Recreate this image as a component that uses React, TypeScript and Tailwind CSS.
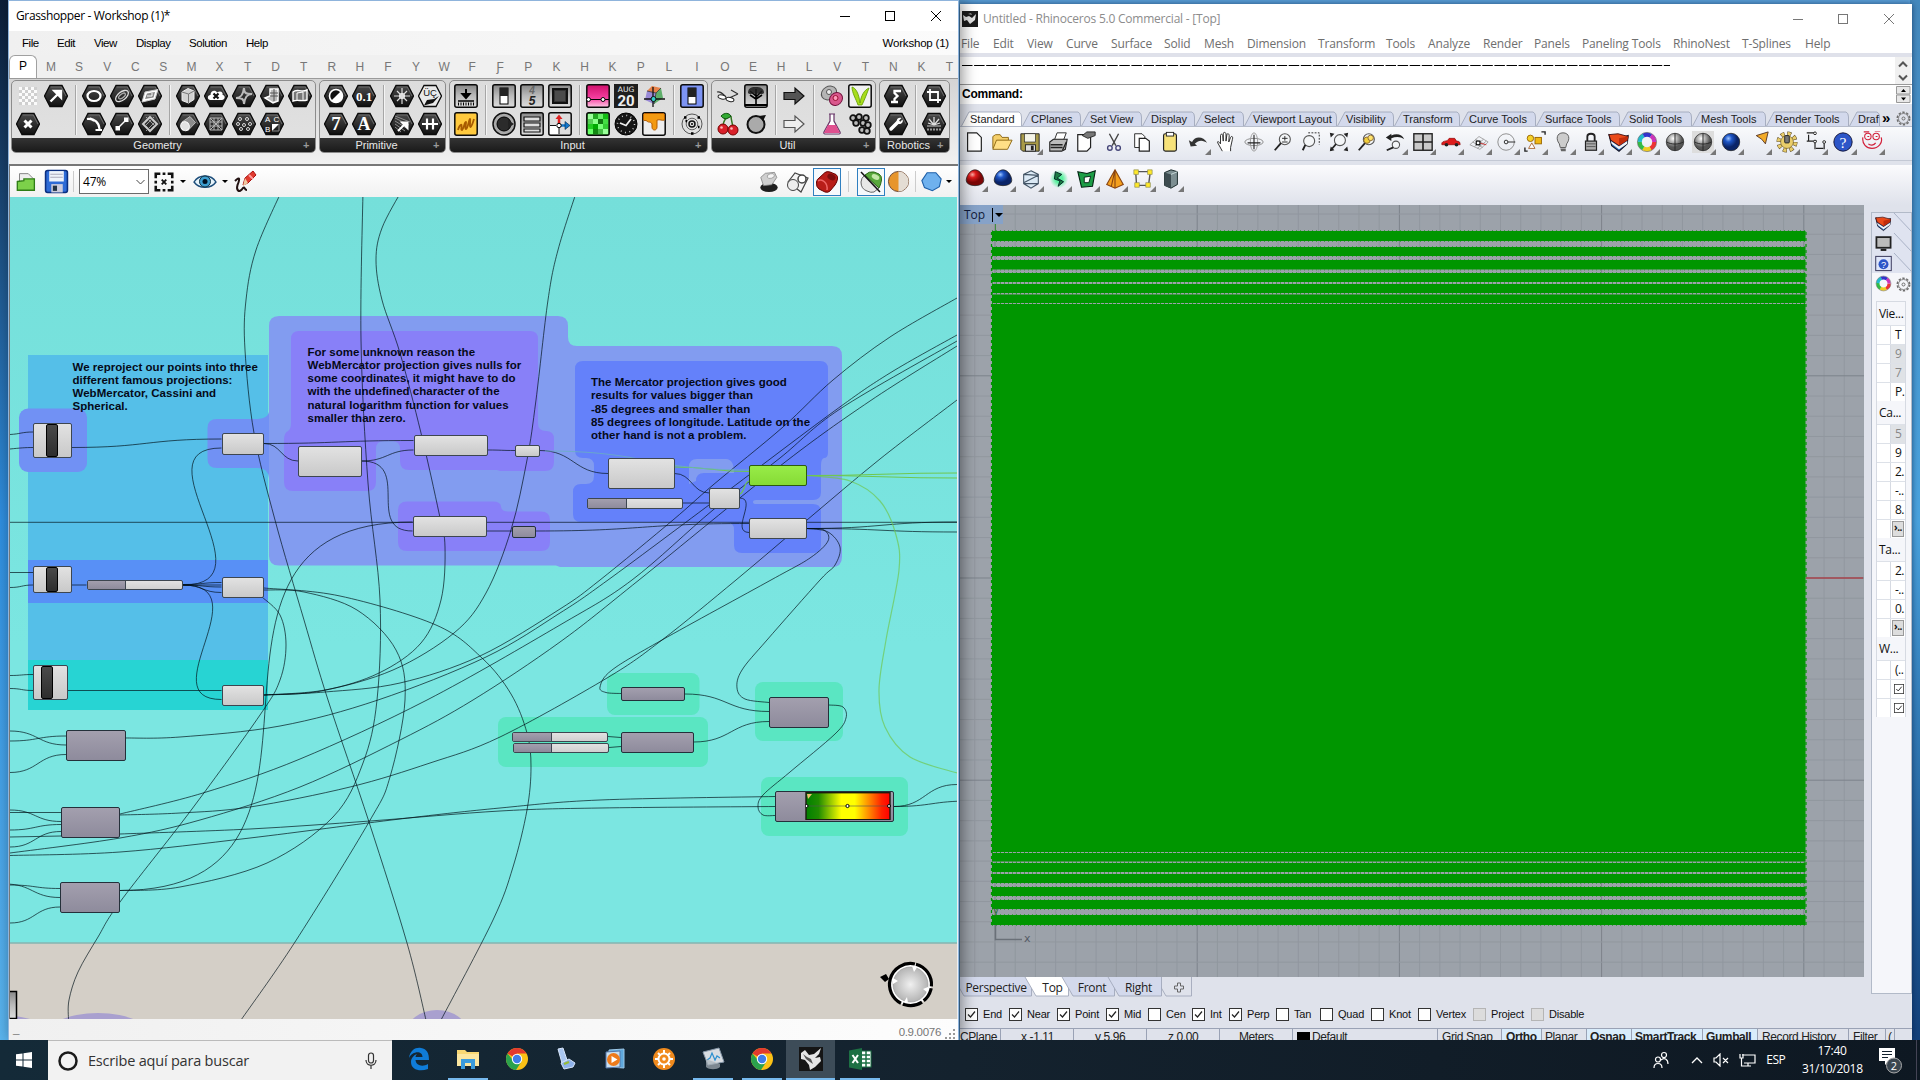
import React from 'react';

type Pt = [number, number];

/* ---------- helpers ---------- */

function spline(p: Pt[]): string {
  let d = `M${p[0][0]} ${p[0][1]}`;
  for (let i = 0; i < p.length - 1; i++) {
    const a = p[i - 1] || p[i];
    const b = p[i];
    const c = p[i + 1];
    const e = p[i + 2] || c;
    d += ` C${b[0] + (c[0] - a[0]) / 6} ${b[1] + (c[1] - a[1]) / 6} ${c[0] - (e[0] - b[0]) / 6} ${c[1] - (e[1] - b[1]) / 6} ${c[0]} ${c[1]}`;
  }
  return d;
}

const wire = (x1: number, y1: number, x2: number, y2: number) => {
  const m = (x1 + x2) / 2;
  return `M${x1} ${y1} C${m} ${y1} ${m} ${y2} ${x2} ${y2}`;
};

/* Labels laid out in a row, each one as wide as the distance to the next. */
function Slots({ items, start, end, className = '' }: { items: [string, number][]; start: number; end: number; className?: string }) {
  return (
    <div className={`flex shrink-0 items-center whitespace-nowrap ${className}`}>
      <span className="shrink-0" style={{ width: items[0][1] - start }} />
      {items.map(([t, x], i) => (
        <span key={i} className="shrink-0" style={{ width: (items[i + 1] ? items[i + 1][1] : end) - x }}>
          {t}
        </span>
      ))}
    </div>
  );
}

function Ico({ children, s = 24 }: { children: React.ReactNode; s?: number }) {
  return (
    <svg width={s} height={s} viewBox="0 0 24 24" className="block shrink-0" fill="none">
      {children}
    </svg>
  );
}

/* ---------- Grasshopper ribbon icons ---------- */

const W = '#fff';

function Hex({ children, light }: { children?: React.ReactNode; light?: boolean }) {
  return (
    <Ico>
      <path d="M6 1.5H18L23.5 12L18 22.5H6L.5 12Z" fill={light ? '#e9e9e9' : 'url(#hexg)'} stroke="#0b0b0b" strokeWidth="1.3" />
      {!light && <path d="M6.7 3H17.3L22 12" stroke="#777" strokeWidth=".8" />}
      {children}
    </Ico>
  );
}

function Tile({ children, fill = 'url(#tileg)' }: { children?: React.ReactNode; fill?: string }) {
  return (
    <Ico>
      <rect x=".8" y=".8" width="22.4" height="22.4" rx="2" fill={fill} stroke="#0a0a0a" strokeWidth="1.5" />
      {children}
    </Ico>
  );
}

function HexText({ t, size, y = 17 }: { t: string; size: number; y?: number }) {
  return (
    <Hex>
      <text x="12" y={y} textAnchor="middle" fontSize={size} fontWeight="bold" fill={W} fontFamily="Liberation Serif, serif">
        {t}
      </text>
    </Hex>
  );
}

const gh: Record<string, React.ReactNode> = {
  checker: (
    <Ico>
      {[0, 1, 2, 3, 4, 5].map((r) =>
        [0, 1, 2, 3, 4, 5].map((c) => (
          <rect key={`${r}${c}`} x={3 + c * 3} y={3 + r * 3} width="3" height="3" fill={(r + c) % 2 ? '#cfcfcf' : '#fbfbfb'} />
        )),
      )}
    </Ico>
  ),
  arrow: <Hex><path d="M6.5 17.5L14 10M10.5 7H17V13.5Z" stroke={W} strokeWidth="2.4" fill={W} /></Hex>,
  cross: <Hex><path d="M8.5 8.5L15.5 15.5M15.5 8.5L8.5 15.5" stroke={W} strokeWidth="3" /></Hex>,
  circle: <Hex><ellipse cx="12" cy="12" rx="6.5" ry="5" stroke={W} strokeWidth="2.2" /></Hex>,
  ellipse: (
    <Hex>
      <ellipse cx="12" cy="12" rx="7.5" ry="4" transform="rotate(-38 12 12)" stroke="#ddd" strokeWidth="1.3" />
      <ellipse cx="12" cy="12" rx="4" ry="1.8" transform="rotate(-38 12 12)" stroke="#aaa" strokeWidth="1.3" />
    </Hex>
  ),
  plane: <Hex><path d="M7 8L20 5.5L17 15L4 18Z" fill={W} stroke="#ccc" /><path d="M9 9.5L17 8L15.5 13.5L7 15Z" fill="#888" /><path d="M9 12H14V9" stroke={W} /></Hex>,
  arc: <Hex><path d="M5 7C13 6 17 11 17.5 17M13.5 18H20" stroke={W} strokeWidth="2.2" /><path d="M8 6L12 9" stroke={W} strokeWidth="2" /></Hex>,
  line: <Hex><path d="M8 16L16 8" stroke={W} strokeWidth="1.4" /><rect x="5.5" y="14" width="4.5" height="4.5" fill={W} /><rect x="14" y="5.5" width="4.5" height="4.5" fill={W} /></Hex>,
  rect: <Hex><path d="M12 5L19 12L12 19L5 12Z" stroke="#ccc" strokeWidth="2" /><path d="M8 5L17 14M16 5L7 14M8 19L17 10" stroke="#aaa" strokeWidth=".9" /></Hex>,
  box: <Hex><path d="M6 8L12 4.5L18 7V15.5L12.5 19L6 16.5Z" fill="#d2d2d2" stroke="#eee" /><path d="M6 8L12.5 10L18 7M12.5 10V19" stroke="#777" /></Hex>,
  cloud: <Hex><path d="M6.5 16C3 16 3 11 6.5 11C6.5 6 12 6 13 8.5C17 6 19.5 9 18.5 11C22 11.5 21 16 18 16Z" fill={W} /><path d="M9.5 9.5L14.5 14.5M14.5 9.5L9.5 14.5" stroke="#111" strokeWidth="2.2" /></Hex>,
  brep: <Hex><path d="M4 14C9 14 11 11 12 4M20 10C15 10 13 13 12 20M12 4C12 10 15 10 20 10M4 14C9 14 12 14 12 20" stroke="#bbb" strokeWidth="2" /></Hex>,
  mesh: <Hex><path d="M10 5H18V17L13 19L5 14L10 12Z" fill="#bbb" stroke={W} strokeWidth="1.5" /><path d="M14 5V17M10 9H18M10 12H18" stroke="#555" /></Hex>,
  surf: <Hex><path d="M5 17V8C9 4 13 9 19 6V16C14 18 10 15 5 17Z" fill="#777" stroke={W} strokeWidth="1.4" /><path d="M9 16V9L15 8V16" stroke={W} /></Hex>,
  cyl: <Hex><path d="M6 10L14 4.5L19.5 10.5L12 18.5Z" fill="#8c8c8c" stroke="#ccc" strokeWidth=".8" /><ellipse cx="9" cy="14.2" rx="4.2" ry="4.6" transform="rotate(-35 9 14.2)" fill="#e2e2e2" stroke={W} /></Hex>,
  grid: <Hex><path d="M6 6H18V18H6ZM10 6V18M14 6V18M6 10H18M6 14H18M6 6L18 18M18 6L6 18" stroke="#b5b5b5" strokeWidth="1" /></Hex>,
  pts: (
    <Hex>
      {[[8, 7], [15, 7], [6, 12], [12, 13], [18, 12], [9, 17], [16, 17]].map(([x, y]) => (
        <circle key={`${x}-${y}`} cx={x} cy={y} r="1.5" stroke="#ddd" strokeWidth="1" />
      ))}
    </Hex>
  ),
  abc: (
    <Hex>
      <text x="5" y="10" fontSize="8" fill={W} fontFamily="Liberation Sans">A</text>
      <text x="13.5" y="10" fontSize="8" fill={W} fontFamily="Liberation Sans">C</text>
      <text x="5" y="19.5" fontSize="8" fill={W} fontFamily="Liberation Sans">B</text>
      <path d="M12 12H19L12 19Z" fill={W} /><path d="M19 12V19H12" stroke="#888" />
    </Hex>
  ),
  bool: <Hex><circle cx="12" cy="12" r="6.5" fill="#111" stroke={W} strokeWidth="1.6" /><path d="M16.6 7.4A6.5 6.5 0 0 1 7.4 16.6Z" fill={W} /></Hex>,
  dec: <HexText t="0.1" size={13} y={16.5} />,
  seven: <HexText t="7" size={19} y={18} />,
  letter: <HexText t="A" size={18} y={18} />,
  burst: <Hex><circle cx="12" cy="12" r="3" fill={W} /><path d="M12 4V20M4 12H20M7 7L17 17M17 7L7 17" stroke="#ddd" strokeWidth="1.2" /></Hex>,
  uc: (
    <Hex light>
      <text x="12" y="12" textAnchor="middle" fontSize="9.5" fill="#111" fontFamily="Liberation Sans">ÜÇ</text>
      <path d="M6 21.500L9 16L16 15L21 12L15 19Z" fill="#111" />
    </Hex>
  ),
  field: <Hex><path d="M5 6L19 13M5 9L18 17M5 12L15 19M5 15L11 20M5 4L20 10" stroke="#999" strokeWidth=".9" /><path d="M8 19L15 12M12 10.5H17.5V16Z" stroke={W} strokeWidth="2" fill={W} /></Hex>,
  domain: <Hex><path d="M4 12H20M9 6.5V17.5M15 6.5V17.5" stroke={W} strokeWidth="2.2" /></Hex>,
  down: <Tile><path d="M12 5V13M8.5 10L12 14L15.5 10Z" stroke="#000" strokeWidth="2" fill="#000" /><path d="M4 17H20" stroke="#000" strokeWidth="1.5" /><path d="M4 20H20" stroke="#000" strokeWidth="3" strokeDasharray="1 1.5" /></Tile>,
  scribble: <Tile fill="#ffc93d"><path d="M4 18C5 14 7 12 7.500 13C8 15 6.500 18 8 18C9.500 17 11 9 12 10C12.500 11 10.500 17 12 17C14 16 15 7 16 7C17 8 15 15 16.500 15C18 14 19 10 20 7" stroke="#a85b00" strokeWidth="1.8" /></Tile>,
  toggle: <Tile><rect x="8" y="4" width="8" height="16" fill="#fff" stroke="#000" /><rect x="8" y="4" width="8" height="8" fill="#222" /></Tile>,
  digits: (
    <Tile>
      <text x="12" y="10" textAnchor="middle" fontSize="10" fontWeight="bold" fontStyle="italic" fill="#666" fontFamily="Liberation Sans">4</text>
      <text x="12" y="21" textAnchor="middle" fontSize="12" fontWeight="bold" fontStyle="italic" fill="#222" fontFamily="Liberation Sans">5</text>
    </Tile>
  ),
  screen: <Tile><rect x="5" y="5" width="14" height="14" fill="#333" stroke="#111" strokeWidth="2" /><rect x="7" y="7" width="10" height="10" fill="#4a4a4a" /></Tile>,
  knob: <Ico><circle cx="12" cy="12" r="11" fill="#aaa" stroke="#111" strokeWidth="1.5" /><circle cx="12" cy="12" r="7" fill="#2b2b2b" stroke="#000" /><path d="M16 8L22 12L16 16Z" fill="#222" /></Ico>,
  list: <Tile><path d="M4 5H20V9H4ZM4 11H20V15H4ZM4 17H20V20H4Z" fill="#ddd" stroke="#111" strokeWidth="1.2" /></Tile>,
  gizmo: <Tile fill="#ddd"><rect x="2" y="13" width="9" height="9" fill="#fff" /><path d="M11 13V5" stroke="#d22" strokeWidth="2.5" /><path d="M7.5 7L11 2.5L14.5 7Z" fill="#d22" /><path d="M12 13.5H18" stroke="#17c" strokeWidth="2.5" /><path d="M17 9.5L22 13.5L17 17.5Z" fill="#17c" stroke="#024" strokeWidth=".6" /><circle cx="11" cy="13.5" r="2.2" fill="#fff" stroke="#000" /><path d="M11 16V22M2 13.500H8" stroke="#111" /></Tile>,
  pink: <Tile fill="url(#pinkg)"><path d="M1 15.5H23" stroke="#000" /><circle cx="2.5" cy="15.5" r="2" fill="#fff" stroke="#000" /><circle cx="17" cy="15.5" r="2" fill="#fff" stroke="#000" /></Tile>,
  cal: (
    <Ico>
      <rect width="24" height="24" fill="#1e1e1e" />
      <text x="12" y="7.5" textAnchor="middle" fontSize="7.5" fill="#eee" fontFamily="DejaVu Sans">AUG</text>
      <text x="12" y="21.500" textAnchor="middle" fontSize="15" fontWeight="bold" fill="#eee" fontFamily="Roboto">20</text>
    </Ico>
  ),
  cube: <Ico><path d="M5 7L10 2L19 4L14 9Z" fill="#e8824a" /><path d="M5 7L14 9L12 20L3 16Z" fill="#9a8ad6" /><path d="M14 9L19 4L21 14L12 20Z" fill="#5fae6a" /><path d="M5 7L14 9L19 4M14 9L12 20" stroke="#333" strokeWidth=".8" /><path d="M2 15H23M11 3V23" stroke="#111" strokeWidth="1.3" /><circle cx="11.5" cy="15" r="2.5" fill="#3cc" stroke="#111" /></Ico>,
  green: (
    <Tile fill="#3cb83c">
      {['#9f9', '#2a2', '#6e6', '#1b1', '#5c5', '#8f8', '#171', '#4d4', '#2c2', '#0a0', '#7f7', '#3c3', '#6f6', '#181', '#4b4', '#9f9'].map((c, i) => (
        <rect key={i} x={2 + (i % 4) * 5} y={2 + Math.floor(i / 4) * 5} width="5" height="5" fill={c} />
      ))}
    </Tile>
  ),
  clock: <Ico><circle cx="12" cy="12" r="11" fill="#151515" stroke="#000" /><circle cx="12" cy="12" r="8.5" stroke="#ccc" strokeWidth="1.5" strokeDasharray="1 3.45" /><path d="M6 11L12 13.5L17 7" stroke="#eee" strokeWidth="1.8" /></Ico>,
  honey: <Tile fill="#eee"><path d="M1.5 3C1.5 2 2 1.5 3 1.5H21C22 1.5 22.5 2 22.5 3V8C20 9 18 7 15 8V15C15 19 10 19 10 15V12C9 9 6 11 5 9C4 8 2 9 1.5 8Z" fill="#f39a12" stroke="#b55c00" /></Tile>,
  toggleBlue: <Tile fill="#7d94f4"><rect x="8" y="4" width="8" height="16" fill="#fff" stroke="#000" /><rect x="8" y="4" width="8" height="9" fill="#222" /></Tile>,
  atom: <Ico><circle cx="12" cy="12" r="10" stroke="#555" strokeWidth="1" /><circle cx="12" cy="12" r="5.800" stroke="#666" strokeWidth="1" /><circle cx="12" cy="12" r="3" stroke="#111" strokeWidth="1.5" /><circle cx="12" cy="12" r="1" fill="#000" /><path d="M4 5.500h2.500M17.500 5.500h2.500M11 21.5h2.500M5.500 9h1.500M18 15h1.500" stroke="#000" strokeWidth="2.5" /></Ico>,
  glasses: <Ico><path d="M1 8C4 7 6 9 9 12M22 10L15 6M13 14L22 10" stroke="#333" strokeWidth="1.2" /><ellipse cx="6" cy="13" rx="4" ry="2" transform="rotate(12 6 13)" fill="#fff" stroke="#222" /><ellipse cx="14" cy="15.5" rx="4" ry="2" transform="rotate(12 14 15.5)" fill="#fff" stroke="#222" /></Ico>,
  tree: <Tile><path d="M12 21V12L6 7M12 13L18 7M12 12V5M12 15L18 11M12 15L6 11" stroke="#000" strokeWidth="1.6" /><path d="M4 9C4 3 9 3 12 3C16 3 20 4 20 9C18 11 16 9 12 10C9 9 6 11 4 9Z" fill="#1b1b1b" fillOpacity=".85" /><path d="M1 20H23V22H1Z" fill="#000" /></Tile>,
  arrowDark: <Ico><path d="M2 8.5H13V4L22 12L13 20V15.5H2Z" fill="#555" stroke="#111" strokeWidth="1.2" /></Ico>,
  arrowLight: <Ico><path d="M2 8.5H13V4L22 12L13 20V15.5H2Z" fill="#eee" stroke="#555" strokeWidth="1.2" /></Ico>,
  pills: <Ico><ellipse cx="9" cy="9" rx="8" ry="6.5" fill="#b5b5b5" stroke="#555" transform="rotate(-30 9 9)" /><circle cx="9" cy="8" r="2.5" fill="#eee" stroke="#555" /><ellipse cx="16" cy="15" rx="7" ry="6" fill="#d9578c" stroke="#70113c" transform="rotate(-45 16 15)" /><circle cx="15.5" cy="14" r="2.5" fill="#f9b" stroke="#913" /></Ico>,
  sprout: <Tile fill="#f2f2f2"><path d="M4 3C8 4 11 10 12 19C13 12 16 6 21 4C19 9 17 15 14 21H10C8 15 4 9 4 3Z" fill="#a8dd1c" stroke="#5e9a00" strokeWidth=".8" /></Tile>,
  cherry: <Ico><path d="M7 15C7 8 10 5 15 4M17 15C16 10 15 7 15 4" stroke="#372" strokeWidth="1.5" /><path d="M5 4C9 0 13 1 15 4C11 8 7 7 5 4Z" fill="#3a3" stroke="#151" /><circle cx="7" cy="17" r="5" fill="#d9202a" stroke="#700" /><circle cx="17" cy="18" r="5" fill="#d9202a" stroke="#700" /><circle cx="5.5" cy="15.5" r="1.3" fill="#fbb" /><circle cx="15.5" cy="16.5" r="1.3" fill="#fbb" /></Ico>,
  ring: <Ico><circle cx="12" cy="12.5" r="8.5" fill="#aaa" stroke="#111" strokeWidth="2" /><path d="M15 4L22 3L19 9Z" fill="#111" /></Ico>,
  flask: <Ico><path d="M9 2H15M10 2V9L4 20C3.5 21.5 4 22 5 22H19C20 22 20.5 21.5 20 20L14 9V2" fill="#fff" stroke="#636" strokeWidth="1.2" /><path d="M8 13H16L20 21H4Z" fill="#e0508f" /></Ico>,
  balls: (
    <Ico>
      {[[5, 6], [11, 5], [18, 6], [8, 11], [15, 11], [20, 13], [14, 18], [19, 19]].map(([x, y], i) => (
        <circle key={i} cx={x} cy={y} r="2.8" fill="#bbb" stroke="#111" strokeWidth="1.8" />
      ))}
    </Ico>
  ),
  robot: <Hex><path d="M7 18H14M10.500 18V15L13.500 12L10.500 9V7H17" stroke={W} strokeWidth="2.3" /></Hex>,
  crop: <Hex><path d="M8 5V16H19M5 8H16V19" stroke={W} strokeWidth="1.8" /></Hex>,
  wrench: <Hex><path d="M7 17L14 10" stroke={W} strokeWidth="3.5" strokeLinecap="round" /><path d="M17.5 6L15 8.5L16 10L18.5 7.5C20 11 16 13 13.5 11.5C11.5 8 14 4.5 17.5 6Z" fill={W} /></Hex>,
  spark: <Hex><path d="M5 14H19" stroke="#ccc" strokeWidth="1.2" /><path d="M5 17.5H19" stroke="#999" strokeWidth="2" strokeDasharray="2 1" /><path d="M12 13V5M12 13L7 7M12 13L17 7M12 13L6 11M12 13L18 11" stroke="#ddd" strokeWidth="1.3" /></Hex>,
};

/* each section: [top row, bottom row] */
const ribbon: { name: string; w: number; ml: number; sections: [string[], string[]][] }[] = [
  { name: 'Geometry', w: 305, ml: 1, sections: [[['checker', 'arrow'], ['cross']], [['circle', 'ellipse', 'plane'], ['arc', 'line', 'rect']], [['box', 'cloud', 'brep', 'mesh', 'surf'], ['cyl', 'grid', 'pts', 'abc']]] },
  { name: 'Primitive', w: 127, ml: 3, sections: [[['bool', 'dec'], ['seven', 'letter']], [['burst', 'uc'], ['field', 'domain']]] },
  { name: 'Input', w: 259, ml: 3, sections: [[['down'], ['scribble']], [['toggle', 'digits', 'screen'], ['knob', 'list', 'gizmo']], [['pink', 'cal', 'cube'], ['green', 'clock', 'honey']], [['toggleBlue'], ['atom']]] },
  { name: 'Util', w: 165, ml: 3, sections: [[['glasses', 'tree'], ['cherry', 'ring']], [['arrowDark'], ['arrowLight']], [['pills', 'sprout'], ['flask', 'balls']]] },
  { name: 'Robotics', w: 71, ml: 3, sections: [[['robot'], ['wrench']], [['crop'], ['spark']]] },
];

function Ribbon() {
  return (
    <div className="flex h-[86px] shrink-0 border-t border-[#9a9a9a] bg-gradient-to-b from-[#d4d4d4] to-[#f1f1f1] pl-[1px] pt-[1px]">
      {ribbon.map((g) => (
        <div key={g.name} className="flex h-[73px] shrink-0 flex-col overflow-hidden rounded-[5px] border border-[#8c8c8c] bg-gradient-to-b from-[#dcdcdc] to-[#e2e2e2]" style={{ width: g.w, marginLeft: g.ml }}>
          <div className="flex h-[58px] pl-[2px] pt-[1px]">
            {g.sections.map((s, i) => (
              <React.Fragment key={i}>
                {i > 0 && <div className="mx-[4.5px] my-[3px] w-[1px] shrink-0 bg-[#a6a6a6] shadow-[1px_0_0_#f4f4f4]" />}
                <div className="flex shrink-0 flex-col">
                  {s.map((row, r) => (
                    <div key={r} className="flex h-[28px]">
                      {row.map((n) => (
                        <div key={n} className="flex h-[28px] w-[28px] items-center justify-center">{gh[n]}</div>
                      ))}
                    </div>
                  ))}
                </div>
              </React.Fragment>
            ))}
          </div>
          <div className="flex h-[14px] items-center bg-gradient-to-b from-[#343434] to-[#1a1a1a] text-[11px] leading-[13px] text-[#e8e8e8]">
            <span className="flex-1 text-center">{g.name}</span>
            <span className="w-[12px] text-[11px] font-bold text-[#999]">+</span>
          </div>
        </div>
      ))}
    </div>
  );
}

/* ---------- Grasshopper toolbar ---------- */

const Caret = () => <span className="h-0 w-0 border-x-[3px] border-t-[3px] border-x-transparent border-t-black" />;

function CanvasToolbar() {
  return (
    <div className="flex h-[33px] shrink-0 items-center border-t-2 border-[#777] bg-gradient-to-b from-[#fff] to-[#f1f1f1] pl-[6px]">
      <Ico s={21}><path d="M4 3H14L20 9V20H4Z" fill="#eee" stroke="#777" /><path d="M1.5 12L9 11V9H21V22H1.5Z" fill="#7cd14a" stroke="#2f7d16" strokeWidth="1.5" /></Ico>
      <span className="w-[7px]" />
      <Ico s={25}><rect x="1.5" y="1.5" width="21" height="21" rx="2" fill="#2e6bd6" stroke="#0b2f80" strokeWidth="1.5" /><rect x="5" y="2" width="14" height="10" fill="#eef3fa" /><path d="M6 5H18M6 8H18" stroke="#aab" /><rect x="7" y="14.5" width="11" height="8" fill="#ccd" /><rect x="8.5" y="16" width="4" height="5" fill="#234" /></Ico>
      <span className="ml-[4px] mr-[5px] h-[21px] w-px bg-[#ccc]" />
      <div className="flex h-[25px] w-[70px] items-center border border-[#6b6b6b] bg-white pl-[3px] text-[12px]">
        <span className="flex-1 font-['Open_Sans'] tracking-[-0.2px]">47%</span>
        <svg width="9" height="6" className="mr-[3px]"><path d="M.5 1L4.5 5L8.5 1" stroke="#444" fill="none" /></svg>
      </div>
      <span className="w-[4px]" />
      <Ico s={22}><path d="M3 8V3H8M10.500 3H13.500M16 3H21V8M21 10.500V13.500M21 16V21H16M13.500 21H10.500M8 21H3V16M3 13.500V10.500" stroke="#111" strokeWidth="2.800" /><path d="M9.5 9.5L14.5 14.5M14.5 9.5L9.5 14.5" stroke="#111" strokeWidth="2" /></Ico>
      <span className="w-[5px]" /><Caret /><span className="w-[7px]" />
      <Ico s={24}><path d="M1 12C6 4 18 4 23 12C18 19 6 19 1 12Z" fill="#e8f4fb" stroke="#1d4d7a" strokeWidth="1.4" /><circle cx="12" cy="11.5" r="5.5" fill="#3d9ed0" stroke="#134" /><circle cx="12" cy="11.5" r="2.5" fill="#012" /></Ico>
      <span className="w-[5px]" /><Caret /><span className="w-[5px]" />
      <Ico s={24}><path d="M2 11C7 6 7 9 4.500 15C3 20 6 24 10 18C12 16 11 20 14 20" stroke="#211" strokeWidth="2" /><path d="M10 15L12 8L20 1L23 5L15 13Z" fill="#e03a2e" stroke="#a11" /><path d="M16 5L20 9" stroke="#f99" strokeWidth="2" /><path d="M10 16L12 8L15 13Z" fill="#efc9a0" /></Ico>
      <span className="flex-1" />
      <Ico s={22}><ellipse cx="12" cy="18" rx="9.500" ry="5" fill="#1e1e1e" /><path d="M3 7L8 2.500L18 1.500L20.500 7L15 15L6 16Z" fill="#cfcfcf" stroke="#777" strokeWidth=".8" /><ellipse cx="14" cy="5.500" rx="4" ry="2.500" transform="rotate(-15 14 5.500)" fill="#f4f4f4" stroke="#888" strokeWidth=".7" /></Ico>
      <span className="w-[6px]" />
      <Ico s={24}><path d="M2 12L9 3L22 8L15 22Z" fill="#f4f4f4" stroke="#444" strokeWidth="1.2" /><circle cx="7" cy="15" r="5.5" fill="#eee" stroke="#444" /><circle cx="16" cy="9" r="4" fill="#fff" stroke="#444" strokeWidth="1.5" /></Ico>
      <span className="w-[3px]" />
      <div className="flex h-[28px] w-[28px] items-center justify-center border border-[#2f7fc0] bg-[#f6f9fc]">
        <Ico s={24}><path d="M1.500 12Q2 9 4 8L10 2.500Q12 1 15 2L21 4.500Q23 6 22.500 9Q22 12 20 15L15 21Q13 23 10 22L4 19Q1 17 1.500 12Z" fill="#b81d18" stroke="#600" /><ellipse cx="16.500" cy="7" rx="4.300" ry="3" transform="rotate(25 16.500 7)" fill="#7c0d0d" /><path d="M3 11C7 8 13 13 12 20" stroke="#e66" strokeWidth="1.5" /></Ico>
      </div>
      <span className="ml-[7px] mr-[8px] h-[21px] w-px bg-[#ccc]" />
      <div className="flex h-[28px] w-[28px] items-center justify-center border border-[#2f7fc0] bg-[#f6f9fc]">
        <Ico s={24}><path d="M2 12Q2 8 6 5L20 18L15 22Q12 23 8 21Q2 19 2 12Z" fill="#e8e8e8" stroke="#666" /><path d="M6 5Q10 1 15 2L20 4Q23 6 22.500 10Q22 14 20 18Z" fill="#59a83c" stroke="#2b6a15" /><ellipse cx="16.500" cy="7" rx="4" ry="2.5" transform="rotate(25 16.500 7)" fill="#c4e8a8" /><path d="M2 2L21 22" stroke="#111" strokeWidth="1.5" /></Ico>
      </div>
      <span className="w-[2px]" />
      <Ico s={23}><circle cx="12" cy="12" r="10.5" fill="#e7952c" stroke="#643" /><path d="M12 1.5A10.5 10.5 0 0 1 12 22.5Z" fill="#e4ddd4" /></Ico>
      <span className="mx-[5px] h-[21px] w-px bg-[#ccc]" />
      <Ico s={21}><path d="M7 2H17L23 9L21 18L13 22.5L4 19L1 11Z" fill="#6fb1ee" stroke="#1e5fa8" strokeWidth="1.3" /></Ico>
      <span className="w-[4px]" /><Caret /><span className="w-[6px]" />
    </div>
  );
}

/* ---------- Grasshopper canvas ---------- */

const darkWires: string[] = [
  'M10 434.5C20 434 22 432 33 432', 'M10 449C20 448 25 447.5 33 447.5',
  wire(72, 447.5, 221.5, 439),
  'M183 585C275 585 135 448 221.5 448', 'M183 585C262 585 150 699.5 221.5 699.5',
  wire(183, 584.5, 221.5, 582.5), 'M183 585H221.5', wire(183, 585, 221.5, 587), wire(183, 585, 221.5, 592.5),
  'M72 585H86.5', 'M67.5 690.5H221.5', 'M10 572.5H33', wire(10, 587.5, 33, 585), wire(10, 675.5, 33, 674.5), wire(10, 688.5, 33, 690.5),
  wire(264, 443.5, 298, 461), wire(264, 443.5, 413.5, 440.5), wire(361.5, 461, 413.5, 450),
  'M361.5 461C413 461 364 531 412.5 531', wire(488, 450, 515, 450.5), wire(539.5, 450.5, 608, 473.5),
  'M487 531H512', wire(536, 531, 749, 523.5), 'M10 522.3H957',
  'M120 890.5C385 890.5 145 522 412.5 522',
  spline([[120, 890.5], [180, 887], [267, 863], [333, 817], [363, 763], [377, 700], [380, 600], [368, 483], [361, 340], [363, 190]]),
  spline([[264, 590], [304, 592], [357, 610], [396, 650], [405, 700], [390, 777], [369, 822], [295, 942], [241, 1020]]),
  spline([[264, 588], [340, 596], [436, 625], [482, 658], [511, 694], [527, 733], [531, 767], [527, 810], [513, 867], [493, 920], [441, 1020]]),
  spline([[282, 190], [256, 250], [246, 300], [245, 350], [254, 433], [275, 520], [304, 620], [328, 700], [369, 822], [407, 943], [426, 1020]]),
  spline([[402, 190], [382, 228], [376, 260], [382, 300], [400, 353], [421, 433], [439, 513], [445, 547], [441, 600], [421, 643], [379, 673], [325, 690], [264, 695]]),
  spline([[577, 190], [558, 250], [548, 300], [536, 400], [527, 460], [511, 530], [486, 593], [454, 633], [393, 670], [321, 691], [264, 695]]),
  spline([[264, 695], [325, 692], [400, 683], [480, 656], [560, 609], [600, 580], [673, 520], [713, 485], [783, 427], [833, 380], [890, 337], [957, 298]]),
  spline([[125.5, 738], [180, 737], [280, 726], [378, 700], [486, 657], [560, 613], [608, 580], [713, 502], [833, 412], [890, 373], [957, 335]]),
  spline([[120, 814], [203, 793], [300, 759], [427, 700], [560, 625], [632, 580], [713, 510], [780, 458], [840, 409], [957, 341]]),
  spline([[10, 853], [120, 838], [200, 820], [300, 787], [400, 740], [473, 700], [560, 642], [639, 580], [780, 466], [870, 401], [957, 346]]),
  spline([[120, 815], [180, 813], [250, 807], [350, 787], [430, 763], [500, 737], [607, 678], [662, 640], [736, 580], [807, 520], [880, 459], [957, 400]]),
  wire(674.5, 473.5, 709.5, 493), 'M683 503H709.5', 'M739.5 498C758 498 730 532 749 532.5',
  wire(807, 528.5, 957, 522), wire(807, 528.5, 957, 532),
  spline([[807, 528.5], [824, 530], [828, 541], [810, 558], [771, 580], [662, 640], [612, 670], [600, 687], [606, 692.5], [621, 693.5]]),
  spline([[807, 528.5], [828, 532], [840, 547], [835, 565], [820, 580], [767, 640], [742, 670], [737, 688], [745, 699], [769, 702.5]]),
  wire(685, 694, 769, 711.5), wire(693.5, 742, 769, 721.5),
  spline([[829, 705], [843, 707], [846, 718], [835, 734], [790, 772], [763, 795], [758, 807], [763, 815], [775, 815.5]]),
  'M608 736.5L621 737.5', 'M609 747.5L621 746.5',
  spline([[10, 855.5], [120, 852], [250, 838], [400, 819], [500, 808], [600, 800], [775, 796.5]]),
  spline([[120, 834], [250, 829], [370, 821], [500, 811], [600, 808], [775, 806.5]]),
  'M10 837L61 836',
  wire(894, 806.5, 957, 784.5), wire(894, 806.5, 970, 801),
  wire(10, 741, 66, 736), wire(10, 731, 66, 745), wire(10, 772.5, 66, 754.5),
  'M10 812.5H61', wire(10, 810, 61, 821.5), wire(10, 830, 61, 824.5), wire(10, 847, 61, 831.5),
  wire(10, 885, 60, 888.5), wire(5, 884, 60, 897.5), wire(10, 923, 60, 907),
  spline([[262, 597], [280, 615], [286, 645], [280, 680], [260, 715], [192, 809], [120, 902], [98, 937], [78, 972], [69, 1000], [68.5, 1020]]),
];

const greenWires: string[] = [
  wire(674, 467, 749, 471.5), wire(807, 475.5, 957, 473), wire(807, 475.5, 957, 478), wire(739.5, 494, 749, 481),
  spline([[807, 475.5], [850, 481], [880, 501], [896, 535], [899, 570], [886, 640], [879, 690], [885, 727], [910, 757], [957, 773]]),
];

/* kind, left, top, right, bottom, divider */
type Node = ['light' | 'gray' | 'lime' | 'bar' | 'slider', number, number, number, number, number?];
const nodes: Node[] = [
  ['bar', 33, 422.5, 72, 457.5, 45.5], ['light', 221.5, 433, 264, 454.5], ['bar', 33, 565.5, 72, 593, 45.5],
  ['slider', 86.5, 579.5, 183, 590, 126], ['light', 221.5, 577, 264, 598], ['bar', 33, 665, 67.5, 699.5, 41],
  ['light', 221.5, 684.5, 264, 706], ['light', 298, 445.5, 361.5, 476.5], ['light', 413.5, 434.5, 488, 456],
  ['light', 515, 444.5, 539.5, 456.5], ['light', 412.5, 515.5, 487, 537], ['gray', 512, 525.5, 536, 537.5],
  ['light', 608, 458, 674.5, 488.5], ['slider', 587, 498, 683, 508.5, 626.5], ['light', 709, 487.5, 739.5, 508.5],
  ['lime', 749, 465, 807, 486], ['light', 749, 518, 807, 539],
  ['gray', 621, 687, 685, 701], ['gray', 621, 731.5, 694, 753], ['slider', 512, 731.5, 608, 741.5, 551.5],
  ['slider', 513, 742.5, 609, 752.5, 552], ['gray', 769, 696.5, 829, 727.5],
  ['gray', 66, 730, 126, 761], ['gray', 61, 806.5, 120, 837.5], ['gray', 60, 882, 120, 913],
];

const kindClass = {
  light: 'bg-gradient-to-b from-[#e2e2e2] to-[#c9c9c9] border-[#3d4650]',
  gray: 'bg-gradient-to-b from-[#a39fae] to-[#8e8b9c] border-[#24303a]',
  lime: 'bg-gradient-to-b from-[#98ec48] to-[#86db35] border-[#2c5a10]',
  bar: 'bg-gradient-to-b from-[#e2e2e2] to-[#c9c9c9] border-[#3d4650]',
  slider: 'bg-gradient-to-b from-[#e2e2e2] to-[#d0d0d0] border-[#3d4650]',
};

function NodeBox({ n }: { n: Node }) {
  const [k, l, t, r, b, d] = n;
  return (
    <div className={`absolute flex rounded-[2px] border-[1.5px] ${kindClass[k]}`} style={{ left: l - 10, top: t - 197, width: r - l, height: b - t }}>
      {k === 'slider' && <div className="border-r border-[#3d4650] bg-gradient-to-b from-[#a39fae] to-[#8e8b9c]" style={{ width: (d as number) - l - 1 }} />}
      {k === 'bar' && <div className="w-[12px] rounded-[2px] border border-black bg-gradient-to-b from-[#4a4a4a] to-[#2e2e2e]" style={{ marginLeft: (d as number) - l - 1 }} />}
    </div>
  );
}

function Note({ x, y, lines }: { x: number; y: number; lines: string[] }) {
  return (
    <div className="absolute font-['Liberation_Sans'] text-[11.5px] font-bold leading-[13.3px] tracking-[0.03px] whitespace-nowrap text-[#050a18]" style={{ left: x - 10, top: y - 197 }}>
      {lines.map((l) => <div key={l}>{l}</div>)}
    </div>
  );
}

function Canvas() {
  return (
    <div className="relative h-[822px] w-[947px] shrink-0 overflow-hidden bg-[#d4cfc7]">
      <svg className="absolute inset-0" width="947" height="822" viewBox="10 197 947 822" fill="none">
        <rect x="10" y="197" width="947" height="746" fill="url(#aqua)" />
        <path d="M10 943H957" stroke="#85b5b0" strokeWidth="1.5" />
        <ellipse cx="98" cy="1040" rx="56" ry="27" fill="#a9a0cf" />
        <ellipse cx="437" cy="1032" rx="30" ry="22" fill="#a9a0cf" />
        <path d="M10 1016Q20 1016 30 1019H10Z" fill="#a9a0cf" />
        <rect x="28" y="355" width="240" height="355" fill="#55bfe8" />
        <rect x="28" y="560" width="240" height="43" fill="#5890f6" />
        <rect x="28" y="660" width="240" height="50" fill="#27d4d3" />
        <rect x="19" y="408.5" width="68" height="63.5" rx="9" fill="#7191f4" />
        <path d="M217 419H258Q268 418 269 412V478Q268 468 258 468H217Q207.5 468 207.5 459V428Q207.5 419 217 419Z" fill="#7191f4" />
        <path d="M279 316H558Q568 316 568 326V337Q568 346 577 346H832Q842 346 842 356V557Q842 567 832 567H560L556 565.5H279Q269 565.5 269 556V326Q269 316 279 316Z" fill="#829cf0" />
        <path d="M299 331H530Q538 331 538 339V423Q538 431 546 431Q554 431 554 439V462Q554 471 545 471H500L497 470H409Q400 470 400 461V449Q400 441 392 441H384Q376 441 376 449V482Q376 491 367 491H293Q284 491 284 482V440Q284 433 288 431Q291 429 291 423V339Q291 331 299 331Z" fill="#8880f8" />
        <path d="M407 501.5H493Q501 501.5 501 507Q502 511.5 508 511.5H541Q550 511.5 550 520V542Q550 551 541 551H407Q398 551 398 542V510Q398 501.5 407 501.5Z" fill="#8880f8" />
        <path d="M583 361H820Q828 361 828 369V452Q828 458 824 458Q821 459 821 465V492Q821 500 813 500H756Q753 500 753 502Q753 504 756 504H813Q821 504 821 512V545Q821 553 813 553H742Q734 553 734 545V530Q734 522 726 522H581Q573 522 573 514V492Q573 484 581 484H586Q594 484 594 476V466Q594 458 586 458H583Q575 458 575 450V369Q575 361 583 361Z" fill="#6481fa" />
        <path d="M689 484V467Q689 459 697 459H726Q734 459 734 473H704Q696 473 696 481Z" fill="#829cf0" />
        <g fill="#5ae6c2">
          <rect x="607" y="673" width="92.5" height="42" rx="8" />
          <rect x="498" y="717" width="210" height="50" rx="8" />
          <rect x="755" y="682" width="88" height="59" rx="8" />
          <rect x="761" y="777" width="147" height="59" rx="8" />
        </g>
        <g stroke="#001018" strokeOpacity=".68" strokeWidth="1">
          {darkWires.map((d, i) => <path key={i} d={d} />)}
        </g>
        <g stroke="#6fc850" strokeWidth="1.2">
          {greenWires.map((d, i) => <path key={i} d={d} strokeOpacity={i === 4 ? 0.7 : 1} />)}
        </g>
        <path d={wire(545, 451, 749, 470)} stroke="#69b0c0" strokeWidth=".8" />
        <rect x="5" y="991.5" width="11.5" height="27" fill="url(#tileg)" stroke="#000" strokeWidth="1.5" />
      </svg>
      {nodes.map((n, i) => <NodeBox key={i} n={n} />)}
      <div className="absolute left-[765px] top-[594px] flex h-[31px] w-[119px] rounded-[2px] border-[1.5px] border-[#24303a] bg-gradient-to-b from-[#a39fae] to-[#8e8b9c] pl-[29px]">
        <svg width="86" height="28" viewBox="0 0 86 28">
          <rect x="1" y=".7" width="84" height="27" fill="url(#heat)" stroke="#1a1a10" strokeWidth="1.4" />
          <path d="M2 2H7L3 7Z" fill="#f0c070" />
          <path d="M2 14H84" stroke="#555" strokeWidth=".6" />
          <g fill="#fff" stroke="#000"><circle cx="1.5" cy="14" r="1.5" /><circle cx="42.5" cy="14" r="1.6" /><circle cx="84" cy="14" r="1.5" /></g>
        </svg>
      </div>
      <Note x={72.5} y={360.5} lines={['We reproject our points into three', 'different famous projections:', 'WebMercator, Cassini and', 'Spherical.']} />
      <Note x={307.5} y={345.5} lines={['For some unknown reason the', 'WebMercator projection gives nulls for', 'some coordinates, it might have to do', 'with the undefined character of the', 'natural logarithm function for values', 'smaller than zero.']} />
      <Note x={591} y={376} lines={['The Mercator projection gives good', 'results for values bigger than', '-85 degrees and smaller than', '85 degrees of longitude. Latitude on the', 'other hand is not a problem.']} />
      <svg className="absolute left-[868px] top-[760px]" width="60" height="54" viewBox="878 957 60 54">
        <circle cx="910.5" cy="984.5" r="21" stroke="#000" strokeWidth="3.2" strokeDasharray="29 2 15 2 20 2 60 2" fill="#fff" transform="rotate(-75 910.5 984.5)" />
        <circle cx="910.5" cy="984.5" r="17.5" fill="url(#ball)" stroke="#999" strokeWidth=".6" />
        <path d="M880 977L886 974L889 979L885 982Z" fill="#000" />
        <path d="M912 966L917 967.5L914 972ZM893 978L898 981L893 984ZM928 987L923 989L928 993ZM904 1002L908 1003L907 997Z" fill="#fff" />
      </svg>
    </div>
  );
}

const ghTabs = 'M S V C S M X T D T R H F Y W F Ƒ P K H K P L I O E H L V T N K T'.split(' ');

function GrasshopperWindow() {
  return (
    <section className="absolute left-[8px] top-0 flex h-[1040px] w-[951px] flex-col border-x border-t border-[#8fb4dc] bg-[#f0f0f0] font-['Liberation_Sans'] text-black shadow-[3px_0_14px_rgba(0,0,0,0.45)]">
      <div className="flex h-[30px] shrink-0 items-center bg-white pl-[7px] font-['Open_Sans'] text-[12px] tracking-[-0.35px]">
        <span className="flex-1">Grasshopper - Workshop (1)*</span>
        <svg width="120" height="14" viewBox="0 0 120 14" fill="none" stroke="#000" className="mr-[12px]">
          <path d="M14 7.500H24" /><rect x="59.5" y="2.5" width="9" height="9" /><path d="M105 2L115 12M115 2L105 12" />
        </svg>
      </div>
      <div className="flex h-[24px] shrink-0 items-center justify-between bg-gradient-to-r from-[#f0f0f0] to-[#fbfbfb] pr-[9px] pt-[2px] text-[11.5px] tracking-[-0.45px]">
        <Slots start={10} end={300} items={[['File', 23], ['Edit', 58], ['View', 95], ['Display', 137], ['Solution', 190], ['Help', 247]]} />
        <span className="tracking-[-0.2px]">Workshop (1)</span>
      </div>
      <div className="flex h-[23px] shrink-0 items-center">
        <div className="flex h-[23px] w-[28px] items-center justify-center rounded-t-[6px] border border-b-0 border-[#a0a0a0] bg-white pb-[3px] text-[12px]">P</div>
        <div className="flex flex-1 overflow-hidden text-[12px] text-[#777]">
          {ghTabs.map((t, i) => <span key={i} className="w-[28.09px] shrink-0 text-center">{t}</span>)}
        </div>
      </div>
      <Ribbon />
      <div className="flex w-[949px] shrink-0 flex-col border-l border-[#777]">
        <CanvasToolbar />
        <Canvas />
      </div>
      <div className="flex h-[21px] items-center bg-gradient-to-r from-[#f0f0f0] to-[#fdfdfd] pl-[4px] pt-[7px] text-[11.5px] text-[#777]">
        <span className="-mt-[6px] flex-1">_</span>
        <span className="tracking-[-0.3px]">0.9.0076</span>
        <svg width="14" height="12" className="ml-[3px] mt-[2px]" fill="#999"><path d="M9 1h2v2H9zM9 5h2v2H9zM9 9h2v2H9zM5 5h2v2H5zM5 9h2v2H5zM1 9h2v2H1z" /></svg>
      </div>
    </section>
  );
}

/* ---------- Rhino icons ---------- */

const K = '#222';
const Lens = ({ x = 14, y = 9, r = 6 }: { x?: number; y?: number; r?: number }) => (
  <>
    <circle cx={x} cy={y} r={r} fill="#f4f6f8" stroke="#555" strokeWidth="1.2" />
    <path d={`M${x - r * 0.7} ${y + r * 0.7}L3 21`} stroke={K} strokeWidth="2" />
  </>
);
const Ball = ({ f }: { f: string }) => <circle cx="12" cy="12" r="9.5" fill={f} stroke="#222" strokeWidth=".8" />;

const LayerIcon = (
  <>
    <path d="M1 4L12 8L22 5L21 14L12 22L4 16Z" fill="#2f6fc0" stroke="#112" strokeWidth="1.2" />
    <path d="M3 11L12 17L21 11V14L12 20L4 14Z" fill="#f4f4f4" />
    <path d="M1 4L11 3L22 6L21 10L12 16L3 10Z" fill="#ea4a1a" stroke="#411" />
    <path d="M12 8L22 6L21 10L12 16Z" fill="#c22c0c" />
  </>
);
const Wheel = (
  <>
    {['#e33', '#ec2', '#3b4', '#2bc', '#33c', '#c3b'].map((c, i) => (
      <circle key={c} cx="12" cy="12" r="8" stroke={c} strokeWidth="4.5" strokeDasharray="8.6 42" strokeDashoffset={-8.38 * i} />
    ))}
    <circle cx="12" cy="12" r="10.5" stroke="#555" strokeWidth=".6" />
  </>
);

const rhinoIcons: [React.ReactNode, boolean][] = [
  [<path d="M5 2H15L20 7V22H5Z" fill="#fff" stroke={K} strokeWidth="1.3" />, false],
  [<><path d="M2 19V6L5 4H10L12 7H19V10" fill="#f5cf6a" stroke="#8a6510" /><path d="M2 20L6 10H23L18 20Z" fill="#ffdf86" stroke="#8a6510" /></>, false],
  [<><path d="M2 3H22V22H4L2 20Z" fill="#a89a48" stroke={K} /><rect x="6" y="3" width="12" height="9" fill="#f4f4e8" stroke={K} strokeWidth=".7" /><rect x="7" y="15" width="11" height="7" fill="#ddd" stroke={K} /><rect x="13" y="16" width="3" height="5" fill={K} /></>, true],
  [<><path d="M8 10L11 2H21L18 10Z" fill="#fff" stroke={K} /><path d="M3 12L7 9H22L20 20L16 22H3Z" fill="#bbb" stroke={K} strokeWidth="1.2" /><path d="M4 15H17M4 18H17M17 21L21 12" stroke={K} strokeWidth="1.4" /></>, false],
  [<><path d="M3 4H17V18L13 22H3Z" fill="#fff" stroke={K} strokeWidth="1.3" /><path d="M8 5L13 1H22V5L14 8Z" fill="#777" stroke={K} /></>, false],
  [<><path d="M7 3L14 16M17 3L10 16" stroke="#444" strokeWidth="1.5" /><circle cx="7.5" cy="18.5" r="2.5" stroke="#447" strokeWidth="1.5" /><circle cx="16.5" cy="18.5" r="2.5" stroke="#447" strokeWidth="1.5" /></>, false],
  [<><path d="M4 3H12L15 6V18H4Z" fill="#fff" stroke={K} /><path d="M9 8H16L20 11V22H9Z" fill="#fff" stroke={K} strokeWidth="1.3" /></>, false],
  [<><rect x="5" y="3" width="14" height="19" rx="2" fill="#f7e27a" stroke={K} strokeWidth="1.3" /><rect x="8" y="1.5" width="8" height="4" fill="#fff" stroke={K} /></>, false],
  [<path d="M2 10L4 17L11 16L8.5 14C13 9 18 10 22 13C18 6 9 5 5.5 12Z" fill="#333" />, true],
  [<path d="M8 22L3 13C2 11 4 11 6 14V5C6 3 8 3 8.5 5L9 11V3C9 1 11.5 1 12 3V11L13 4C13.5 2 15.5 3 15.5 5L15 12L17 7C18 5 20 6 19 9L17 18V22" fill="#fff" stroke={K} />, false],
  [<><ellipse cx="12" cy="12" rx="10" ry="4" stroke="#888" /><ellipse cx="12" cy="12" rx="4" ry="10" stroke="#999" /><path d="M12 4V20M5 13H19" stroke={K} strokeWidth="1.2" /></>, false],
  [<><Lens /><path d="M11 8H17M14 5.5V10.5M11 12H17" stroke={K} /></>, false],
  [<><path d="M9 2H21V15" stroke={K} strokeDasharray="2 1.5" /><Lens x={10} y={11} /></>, false],
  [<><Lens x={13} y={10} /><path d="M2 2L7 3L3 7ZM22 2L17 3L21 7ZM22 22L17 21L21 17ZM2 22L3 17L7 21Z" fill={K} /></>, false],
  [<><Lens /><circle cx="12" cy="10" r="3.5" fill="#f2cf3a" stroke="#863" /><circle cx="16" cy="7.5" r="3" fill="#ffe36a" stroke="#863" /></>, false],
  [<><path d="M2 7L8 3V5C14 2 20 4 22 9C18 6 13 6 8 8V11Z" fill={K} /><Lens x={13} y={15} r={4} /></>, true],
  [<><rect x="2" y="3" width="20" height="18" fill="#c9c9c9" stroke={K} strokeWidth="1.5" /><path d="M12 3V21M2 12H22" stroke={K} strokeWidth="1.8" /></>, true],
  [<><path d="M2 13C3 11 6 11 8 10.500L10 8H16L18 11C21 11 22 12 22 15H2Z" fill="#dd1c1c" stroke="#800" strokeWidth=".7" /><circle cx="7" cy="15" r="2" fill={K} /><circle cx="18" cy="15" r="2" fill={K} /></>, true],
  [<><path d="M2 15L12 6L22 12L13 20ZM5 12L16 18M8 9L19 15M17 9L7 17M20 11L10 19" stroke="#999" strokeWidth=".9" /><path d="M12 13L20 15" stroke="#c33" /><rect x="9" y="11" width="4" height="4" fill="#fff" stroke="#000" strokeWidth="1.2" /></>, true],
  [<><circle cx="11" cy="12" r="9" stroke="#888" /><circle cx="11" cy="12" r="2" stroke={K} /><path d="M13 12H21" stroke={K} /></>, true],
  [<><circle cx="7" cy="8" r="3.5" fill="#f5d22a" stroke="#960" /><rect x="12" y="7" width="7" height="7" fill="#f0b814" stroke="#960" /><path d="M5 19L8.5 13L12 19Z" fill="#fff" stroke="#a63" /><path d="M1 18V22H4M19 1H23V4" stroke={K} strokeWidth="1.5" /></>, true],
  [<><path d="M12 2C5 2 4 9 8 14L9 18H15L16 14C20 9 19 2 12 2Z" fill="#ccc" stroke="#555" /><path d="M9 19H15V22H10Z" fill="#666" /></>, true],
  [<><path d="M8 11V6C8 2 16 2 16 6V11" stroke={K} strokeWidth="2" /><rect x="6" y="11" width="12" height="10" fill="#aaa" stroke={K} strokeWidth="1.3" /><path d="M7 14H17M7 17H17" stroke="#555" /></>, true],
  [LayerIcon, true],
  [Wheel, true],
  [<><Ball f="url(#ball2)" /><path d="M3 12C8 15 16 15 21 12M12 2.5V21.5" stroke={K} /></>, false],
  [<><rect width="24" height="24" fill="#ddd" /><Ball f="url(#ball2)" /><path d="M3 12C8 15 16 15 21 12M12 2.5V21.5" stroke={K} /></>, true],
  [<Ball f="url(#ballBlue)" />, true],
  [<path d="M9 5L22 1L19 14L15 9Z" fill="#f3ab28" stroke="#532" />, true],
  [<><circle cx="12" cy="12" r="9" stroke="#542" strokeWidth="5" strokeDasharray="4.2 2.87" /><circle cx="12" cy="12" r="9" stroke="#e9cd6a" strokeWidth="4" strokeDasharray="3.2 3.87" strokeDashoffset="-.5" /><circle cx="12" cy="12" r="7" fill="#e9cd6a" stroke="#542" strokeWidth=".6" /><rect x="9.500" y="5" width="5" height="8" rx="1" fill="#777" stroke={K} /></>, true],
  [<><path d="M3 2H12M5 4V11M3 11H14M12 11V20M22 11V20M13 19H21" stroke={K} strokeWidth="1.3" /><circle cx="12" cy="2.5" r="1.5" fill="#fff" stroke={K} /><circle cx="12" cy="11.5" r="1.5" fill="#fff" stroke={K} /><circle cx="22" cy="12" r="1.5" fill="#fff" stroke={K} /></>, true],
  [<><circle cx="12" cy="12" r="10" fill="#2d56c8" stroke="#113" /><text x="12" y="18" textAnchor="middle" fontSize="17" fill="#fff" fontFamily="Liberation Serif">?</text></>, true],
  [<><path d="M2 7C1 14 6 19 12 19C19 19 24 13 22 7" stroke="#d2203a" strokeWidth="1.3" /><circle cx="7.5" cy="6" r="3.5" stroke="#d2203a" strokeWidth="1.2" /><circle cx="16.5" cy="6" r="3.5" stroke="#d2203a" strokeWidth="1.2" /><path d="M3 1H9M15 0H21M7 6H9M16 6H18M8 14C10 16 14 16 16 13" stroke="#d2203a" strokeWidth="1.3" /></>, true],
];

const egg = (f: string) => <path d="M12 2C18 2 22 10 21.5 14C21 21 3 21 2.5 14C2 10 6 2 12 2Z" fill={f} stroke="#222" strokeWidth=".8" />;
const rhinoRow2: [React.ReactNode, boolean][] = [
  [egg('url(#eggRed)'), true],
  [egg('url(#ballBlue)'), true],
  [<path d="M12 3L20 7V17L12 22L4 17V7ZM4 7L20 8M4 16L20 8M4 17H20" fill="#dbe9f5" stroke="#456" strokeWidth="1.2" />, true],
  [<><circle cx="12" cy="12" r="10" fill="url(#glow)" /><path d="M8 4L15 7L10 11L17 15L11 20L13 14L7 12Z" fill="#1b7d44" stroke="#022" /></>, true],
  [<><path d="M2 4L12 6L21 3L18 20L6 21Z" fill="#1d9d46" stroke="#021" strokeWidth="1.2" /><path d="M9 10L16 9L14 16L9 16Z" fill="#fff" stroke="#021" /></>, true],
  [<path d="M12 2L21 18L12 22L3 18ZM12 2V22M12 2L8 20" fill="#f5a01d" stroke="#841" strokeWidth="1.2" />, true],
  [<><path d="M4 4H20L18 19H5Z" stroke="#555" strokeWidth="1.5" /><path d="M2 2h5v5H2zM17 2h5v5H17zM15 16h5v5H15zM3 16h5v5H3z" fill="#ffe92a" stroke="#885" strokeWidth=".7" /></>, true],
  [<><path d="M5 5L12 2L19 4V18L12 22L5 19Z" fill="#7d8f92" stroke="#122" /><path d="M12 7V22L5 19V5Z" fill="#3d4c50" /><path d="M12 7L19 4" stroke="#cdd" /></>, true],
];

function IconRow({ items }: { items: [React.ReactNode, boolean][] }) {
  return (
    <>
      {items.map(([g, c], i) => (
        <div key={i} className="relative flex h-[28px] w-[28.05px] shrink-0 items-center justify-center">
          <svg width="22" height="22" viewBox="0 0 24 24" fill="none">{g}</svg>
          {c && <span className="absolute bottom-[1px] right-[1px] h-0 w-0 border-b-[6px] border-l-[6px] border-b-[#777] border-l-transparent" />}
        </div>
      ))}
    </>
  );
}

const rhinoTabs: [string, number][] = [
  ['Standard', 961], ['CPlanes', 1022], ['Set View', 1081], ['Display', 1142], ['Select', 1195], ['Viewport Layout', 1244], ['Visibility', 1337], ['Transform', 1394], ['Curve Tools', 1460], ['Surface Tools', 1536], ['Solid Tools', 1620], ['Mesh Tools', 1692], ['Render Tools', 1766], ['Draf', 1849],
];

const bands: [number, number][] = [[231, 241], [247, 256], [260, 269.5], [273, 282], [284, 293], [294.5, 303], [304, 852], [853, 861.5], [863, 872], [874, 883], [887, 896], [900, 909], [915, 925]];

function Viewport() {
  const v = Array.from({ length: 46 }, (_, i) => 995 - 20.22 + i * 20.22);
  const h = Array.from({ length: 40 }, (_, i) => 578 - 18 * 20.22 + i * 20.22);
  return (
    <div className="relative h-[772px] w-[904px] bg-[#9ca2aa]">
      <svg className="block" width="904" height="772" viewBox="960 205 904 772" fill="none">
        {v.map((x, i) => <path key={i} d={`M${x} 205V977`} stroke={i % 10 === 1 ? '#7d838b' : '#91979f'} strokeWidth="1" />)}
        {h.map((y, i) => <path key={i} d={`M960 ${y}H1864`} stroke={(i - 18) % 10 === 0 ? '#7d838b' : '#91979f'} strokeWidth="1" />)}
        <path d="M995.5 222V231" stroke="#3f8f3f" />
        <path d="M1806 578H1863" stroke="#a8444c" strokeWidth="1.5" />
        {bands.map(([a, b], i) => (
          <g key={i}>
            <rect x="992" y={a} width="813.5" height={b - a} fill="#009600" />
            <path d={`M992 ${a - 0.5}H1805M992 ${b + 0.5}H1805`} stroke="#009600" strokeOpacity=".55" strokeDasharray="1 3" />
          </g>
        ))}
        <path d="M991.500 232V926M1806 232V926" stroke="#009600" strokeWidth="1.2" strokeDasharray="3 3" />
        <path d="M995.5 925V939.5H1022" stroke="#6a7078" strokeWidth="1.5" />
        <text x="1024" y="942" fontSize="11" fill="#555b66" fontFamily="DejaVu Sans">x</text>
        <text x="993" y="914" fontSize="10" fill="#2d6a35" fontFamily="DejaVu Sans">y</text>
      </svg>
      <div className="absolute left-0 top-0 flex h-[19px] w-[43px] items-center bg-[#86a2c8] pl-[4px] font-['Open_Sans'] text-[12px] text-[#101a3a]">
        <span className="w-[28px]">Top</span>
        <span className="mr-[2px] h-[14px] w-px bg-black" />
        <span className="h-0 w-0 border-x-[4px] border-t-[4px] border-x-transparent border-t-black" />
      </div>
    </div>
  );
}

type PropRow = { k: 'h' | 'r' | 'g' | 'b' | 'c'; t?: string };
const props: PropRow[] = [
  { k: 'h', t: 'Vie...' }, { k: 'r', t: 'T' }, { k: 'g', t: '9' }, { k: 'g', t: '7' }, { k: 'r', t: 'P.' },
  { k: 'h', t: 'Ca...' }, { k: 'g', t: '5' }, { k: 'r', t: '9' }, { k: 'r', t: '2.' }, { k: 'r', t: '-..' }, { k: 'r', t: '8.' }, { k: 'b' },
  { k: 'h', t: 'Ta...' }, { k: 'r', t: '2.' }, { k: 'r', t: '-..' }, { k: 'r', t: '0.' }, { k: 'b' },
  { k: 'h', t: 'W...' }, { k: 'r', t: '(..' }, { k: 'c' }, { k: 'c' },
];

function Check({ on, off, s = 13 }: { on?: boolean; off?: boolean; s?: number }) {
  return (
    <svg width={s} height={s} viewBox="0 0 13 13" className="shrink-0">
      <rect x=".5" y=".5" width="12" height="12" fill={off ? '#dcdcdc' : '#fff'} stroke={off ? '#b5b5b5' : '#333'} />
      {on && <path d="M3 6.5L5.5 9L10 3.5" stroke="#222" fill="none" strokeWidth="1.2" />}
    </svg>
  );
}

const Gear = () => (
  <svg width="15" height="15" viewBox="0 0 15 15" fill="none" stroke="#6e6e6e" className="shrink-0">
    <circle cx="7.5" cy="7.5" r="6.2" strokeDasharray="2.4 1.5" strokeWidth="1.6" />
    <circle cx="7.5" cy="7.5" r="5" strokeWidth=".8" />
    <circle cx="7.5" cy="7.5" r="1.5" />
  </svg>
);

function SidePanel() {
  return (
    <div className="flex h-[782px] w-[41px] flex-col border border-[#b2bac8] bg-[#f5f6fa]">
      {[0, 1, 2, 3].map((i) => (
        <div key={i} className={`flex h-[20px] items-center pl-[3px] ${i < 3 ? 'bg-[#dfe3f0]' : ''}`}>
          <svg width="17" height="17" viewBox="0 0 24 24" fill="none" className="shrink-0">
            {i === 0 && LayerIcon}
            {i === 1 && <><rect x="2" y="3" width="20" height="15" fill="#bbb" stroke="#222" strokeWidth="2.5" /><path d="M8 21H16" stroke="#222" strokeWidth="3" /></>}
            {i === 2 && <><rect x="1" y="2" width="22" height="20" fill="#dfe6fa" stroke="#446" strokeWidth="1.5" /><circle cx="12" cy="13" r="7" fill="#2d56c8" /><text x="12" y="18" fontSize="13" fill="#fff" textAnchor="middle" fontFamily="Liberation Sans">?</text></>}
            {i === 3 && Wheel}
          </svg>
          {i < 3 ? (
            <svg width="20" height="20" fill="none" className="shrink-0"><path d="M2 0L20 19" stroke="#a9b2c6" /></svg>
          ) : (
            <span className="ml-[4px] mt-[3px]"><Gear /></span>
          )}
        </div>
      ))}
      <div className="ml-[4px] mt-[8px] w-[30px] border-x border-t border-[#d6dae2] font-['Open_Sans'] text-[12px] text-[#111]">
        {props.map((p, i) =>
          p.k === 'h' ? (
            <div key={i} className="flex h-[23px] items-center pl-[2px] tracking-[-0.3px]">{p.t}</div>
          ) : (
            <div key={i} className="flex h-[19px] border-t border-[#dde1e8] bg-white">
              <div className="w-[14px] border-r border-[#d6dae2]" />
              <div className={`flex flex-1 items-center overflow-hidden whitespace-nowrap pl-[4px] tracking-[-0.5px] ${p.k === 'g' ? 'bg-[#dfe2e6] text-[#888]' : ''}`}>
                {p.k === 'b' ? <span className="-ml-[3px] h-[16px] w-[12px] border border-[#999] bg-[#ddd] pl-[1px] text-[10px] font-bold leading-[11px]">›..</span> : p.k === 'c' ? <span className="-ml-[1px]"><Check on s={10} /></span> : p.t}
              </div>
            </div>
          ),
        )}
      </div>
    </div>
  );
}

const osnaps: [string, number, number][] = [
  ['End', 965, 1], ['Near', 1009, 1], ['Point', 1057, 1], ['Mid', 1106, 1], ['Cen', 1148, 0], ['Int', 1192, 1], ['Perp', 1229, 1], ['Tan', 1276, 0], ['Quad', 1320, 0], ['Knot', 1371, 0], ['Vertex', 1418, 0], ['Project', 1473, 2], ['Disable', 1531, 2],
];

const statusCells: [string, number, string][] = [
  ['CPlane', 41, ''], ['x -1.11', 73, 'pl-[20px]'], ['y 5.96', 73, 'pl-[21px]'], ['z 0.00', 73, 'pl-[21px]'], ['Meters', 73, 'pl-[19px]'], ['■Default', 145, ''], ['Grid Snap', 64, 'pl-[4px]'], ['Ortho', 40, 'pl-[4px] font-bold bg-[#d9ecfb]'], ['Planar', 45, 'pl-[3px]'], ['Osnap', 45, 'pl-[3px] font-bold bg-[#d9ecfb]'], ['SmartTrack', 71, 'pl-[3px] font-bold bg-[#d9ecfb]'], ['Gumball', 55, 'pl-[3px] font-bold bg-[#d9ecfb]'], ['Record History', 91, 'pl-[4px]'], ['Filter', 37, 'pl-[4px]'], ['(', 9, 'pl-[2px]'],
];

const viewTabs: [string, number, boolean][] = [['Perspective', 72, false], ['Top', 37, true], ['Front', 46, false], ['Right', 47, false]];

function RhinoWindow() {
  return (
    <section className="absolute left-[960px] top-[4px] flex h-[1036px] w-[952px] flex-col overflow-hidden bg-[#dfe2eb] font-['Liberation_Sans'] shadow-[0_0_6px_rgba(0,20,60,0.6)]">
      <div className="flex h-[30px] shrink-0 items-center bg-white font-['Open_Sans'] text-[12px] text-[#8c8c8c]">
        <svg width="16" height="16" viewBox="0 0 16 16" className="ml-[2px] mr-[5px]"><rect width="16" height="16" fill="#1c1c1c" /><path d="M1 4L4 6L7 5L10 7L14 3L13 9L8 13L5 9L2 10Z" fill="#e5e5e5" /><path d="M6 3L9 2L10 4Z" fill="#999" /></svg>
        <span className="flex-1 tracking-[-0.22px]">Untitled - Rhinoceros 5.0 Commercial - [Top]</span>
        <svg width="120" height="14" viewBox="0 0 120 14" fill="none" stroke="#777" className="mr-[7px]"><path d="M8 7.500H18" /><rect x="53.5" y="2.5" width="9" height="9" /><path d="M99 2L109 12M109 2L99 12" /></svg>
      </div>
      <Slots className="h-[19px] bg-white font-['Open_Sans'] text-[12px] tracking-[-0.15px] text-[#6e6e6e]" start={960} end={1860} items={[['File', 961], ['Edit', 993], ['View', 1027], ['Curve', 1066], ['Surface', 1111], ['Solid', 1164], ['Mesh', 1204], ['Dimension', 1247], ['Transform', 1318], ['Tools', 1386], ['Analyze', 1428], ['Render', 1483], ['Panels', 1534], ['Paneling Tools', 1582], ['RhinoNest', 1673], ['T-Splines', 1742], ['Help', 1805]]} />
      <div className="h-[4px] shrink-0 bg-[#dfe1ea]" />
      <div className="flex h-[28px] shrink-0 border-b border-[#999] bg-white">
        <svg width="935" height="27" className="block"><path d="M2 8.500H710" stroke="#000" strokeWidth="1.2" strokeDasharray="10.5 1.6" /></svg>
        <svg width="16" height="27" className="block" fill="none"><rect width="16" height="27" fill="#f0f0f0" /><path d="M4 9.5L8 5.5L12 9.5M4 18.5L8 22.5L12 18.5" stroke="#555" strokeWidth="2" /></svg>
      </div>
      <div className="flex h-[19px] shrink-0 items-center justify-between bg-white pl-[2px]">
        <span className="pb-[2px] text-[12px] font-bold tracking-[-0.25px] text-black">Command:</span>
        <svg width="15" height="18" className="mr-[1px]"><path d="M.5.500H14V8H.5ZM.5 9H14V16.500H.5Z" fill="#e8e8e8" stroke="#999" /><path d="M5 6L7.5 3L10 6ZM5 11.5L7.5 14.5L10 11.5Z" fill="#000" /></svg>
      </div>
      <div className="flex h-[23px] shrink-0 items-end border-b border-t-[3px] border-b-[#b6bccb] border-t-[#dfe2eb] pl-[1px]">
        {rhinoTabs.map(([t, x], i) => {
          const w = (rhinoTabs[i + 1] ? rhinoTabs[i + 1][1] : 1880) - x;
          return (
            <div key={t} className="relative h-[15px] shrink-0 overflow-hidden" style={{ width: w }}>
              <svg className="absolute inset-0" width={w} height="16" fill="none"><path d={`M0 16L8 1H${w - 3}Q${w - 0.5} 2 ${w - 0.5} 6V16Z`} fill={i ? '#d3d9ec' : '#fff'} stroke="#9aa2b5" strokeWidth=".8" /></svg>
              <span className="relative block whitespace-nowrap pl-[9px] text-[11px] leading-[17px] text-[#222]">{t}</span>
            </div>
          );
        })}
        <span className="ml-[2px] w-[14px] shrink-0 text-[15px] font-bold leading-[17px]">»</span>
        <Gear />
      </div>
      <div className="flex h-[34px] shrink-0 items-center border-b border-[#c3c8d4] bg-gradient-to-b from-[#f9fafc] to-[#e4e7ef] pb-[4px]"><IconRow items={rhinoIcons} /></div>
      <div className="h-[4px] shrink-0" />
      <div className="flex h-[40px] shrink-0 items-start bg-gradient-to-b from-[#fbfbfd] to-[#dfe2eb] pl-[1px]"><IconRow items={rhinoRow2} /></div>
      <div className="flex h-[795px] shrink-0">
        <div className="w-[904px] shrink-0">
          <Viewport />
          <div className="flex h-[23px] items-start font-['Open_Sans'] text-[12px] text-[#222]">
            {viewTabs.map(([t, w, on]) => (
              <div key={t} className="relative h-[20px] text-center tracking-[-0.3px]" style={{ width: w }}>
                <svg className="absolute inset-0 overflow-visible" width={w} height="20" fill="none"><path d={`M-7 0L4 19H${w - 0.5}V0`} fill={on ? '#fff' : '#d3d9ec'} stroke="#9aa2b5" strokeWidth=".8" /></svg>
                <span className={`relative leading-[22px] ${on ? 'pl-[4px]' : ''}`}>{t}</span>
              </div>
            ))}
            <svg width="30" height="20" className="overflow-visible" fill="none"><path d="M-7 0L4 19H29.500V0" stroke="#9aa2b5" strokeWidth=".8" /><path d="M15.5 6h3v3h3v3h-3v3h-3v-3h-3v-3h3z" stroke="#666" /></svg>
          </div>
        </div>
        <div className="pl-[7px] pt-[7px]"><SidePanel /></div>
      </div>
      <div className="flex h-[28px] shrink-0 items-center pl-[5px] pt-[1px] text-[11px] text-[#111]">
        {osnaps.map(([t, x, s], i) => (
          <div key={t} className="flex shrink-0 items-center gap-[5px] whitespace-nowrap tracking-[-0.2px]" style={{ width: (osnaps[i + 1] ? osnaps[i + 1][1] : 1600) - x }}>
            <Check on={s === 1} off={s === 2} />{t}
          </div>
        ))}
      </div>
      <div className="flex h-[16px] shrink-0 border-t border-[#9aa2b5] text-[12px] leading-[17px] text-[#222]">
        {statusCells.map(([t, w, c]) => (
          <div key={t} className={`shrink-0 overflow-hidden whitespace-nowrap border-r border-[#9aa2b5] tracking-[-0.4px] ${c}`} style={{ width: w }}>
            {t.startsWith('■') ? <span className="flex"><i className="ml-[4px] mr-[2px] mt-[3px] h-[13px] w-[13px] bg-black" />{t.slice(1)}</span> : t}
          </div>
        ))}
      </div>
    </section>
  );
}

/* ---------- Taskbar ---------- */

const Chrome = () => (
  <svg width="24" height="24" viewBox="0 0 24 24">
    <circle cx="12" cy="12" r="11" fill="#fbc116" />
    <path d="M12 12L2.5 6.5A11 11 0 0 1 21.5 6.5H12Z" fill="#e23a2e" />
    <path d="M2.5 6.5A11 11 0 0 0 11 23L16.5 14.5L12 12H7Z" fill="#2ba24c" />
    <circle cx="12" cy="12" r="5.2" fill="#fff" /><circle cx="12" cy="12" r="4.2" fill="#3f7de8" />
  </svg>
);

const apps: { icon: React.ReactNode; state: '' | 'open' | 'active' }[] = [
  { icon: <svg width="22" height="24" viewBox="0 0 22 24"><path d="M1 11C2 3 8 0 13 1C19 2 21 6 21 13H7.5C8 19 15 20 20 17V22C12 25 3 23 3 15C3 11 6 8 9 7C8 8 7.5 9 7.5 10H14.5C14.5 3 4 4 1 11Z" fill="#0f7cd8" /></svg>, state: '' },
  { icon: <svg width="24" height="22" viewBox="0 0 24 22"><path d="M1 2H9L11 4H23V18H1Z" fill="#f7d774" /><path d="M1 6H23V18H1Z" fill="#fbe6a0" /><path d="M5 11H19V21H15V15H9V21H5Z" fill="#3a9bdc" /></svg>, state: 'open' },
  { icon: <Chrome />, state: '' },
  { icon: <svg width="22" height="24" viewBox="0 0 22 24"><path d="M3 2L8 1L12 13L7 16Z" fill="#a9c6f0" stroke="#d8e6fa" /><path d="M6 16L14 12L20 16L18 20L9 22Z" fill="#8fb2ea" stroke="#d8e6fa" /><path d="M9 17L14 15" stroke="#9b3" strokeWidth="2.2" /></svg>, state: '' },
  { icon: <svg width="22" height="24" viewBox="0 0 22 24"><path d="M5 3L20 2V21L5 20Z" fill="#5fa8dc" stroke="#9cc8e8" /><path d="M2 5L16 4V20L2 21Z" fill="#c9dff0" stroke="#57a" /><circle cx="9.5" cy="12.500" r="6.5" fill="#ee7b1c" /><path d="M7.5 9L13.5 12.500L7.5 16Z" fill="#fff" /></svg>, state: '' },
  { icon: <svg width="24" height="24" viewBox="0 0 24 24" fill="none"><circle cx="12" cy="12" r="11" fill="#f08a1d" /><circle cx="12" cy="12" r="5.5" stroke="#fff" strokeWidth="2" /><path d="M12 3V7M12 17V21M3 12H7M17 12H21M6 6L8 8M18 6L16 8M6 18L8 16M18 18L16 16" stroke="#fff" strokeWidth="2" /><circle cx="12" cy="12" r="1.8" fill="#fff" /></svg>, state: '' },
  { icon: <svg width="24" height="24" viewBox="0 0 24 24" fill="none"><path d="M2 5L18 1L23 15L7 18Z" fill="#d8dde2" stroke="#89a" /><path d="M6 13L9 11L11 6L14 13L16 9L19 11" stroke="#2a8fd0" strokeWidth="1.2" /><path d="M5 12V20C8 23 16 23 19 20V17" fill="#aab3ba" fillOpacity=".7" /></svg>, state: 'open' },
  { icon: <Chrome />, state: 'open' },
  { icon: <svg width="24" height="24" viewBox="0 0 24 24"><rect width="24" height="24" fill="#151515" /><path d="M2 6L6 3L10 8L15 7L22 1L20 7L16 11L21 10L22 14L16 20L11 23L10 18L6 13L2 12Z" fill="#e6e6e6" /><path d="M4 7L8 10L12 12L14 17L11 15L7 12Z" fill="#555" /></svg>, state: 'active' },
  { icon: <svg width="24" height="22" viewBox="0 0 24 22"><rect x="10" y="3" width="13" height="16" fill="#fff" stroke="#1d7044" /><path d="M13 7H22M13 11H22M13 15H22M18 3V19" stroke="#1d7044" strokeWidth="1.5" /><path d="M1 2.5L14 0V22L1 19.5Z" fill="#1d7044" /><path d="M4.5 7L10 15M10 7L4.5 15" stroke="#fff" strokeWidth="2" /></svg>, state: 'open' },
];

function Taskbar() {
  return (
    <footer className="absolute left-0 top-[1040px] flex h-[40px] w-[1920px] items-center bg-gradient-to-r from-[#142a38] via-[#14222e] to-[#0e1822] font-['Open_Sans'] text-white">
      <div className="flex h-[40px] w-[48px] items-center justify-center"><svg width="16" height="16" fill="#fff"><path d="M0 2.3L6.5 1.4V7.5H0ZM7.5 1.2L16 0V7.5H7.5ZM0 8.5H6.5V14.6L0 13.7ZM7.5 8.5H16V16L7.5 14.8Z" /></svg></div>
      <div className="flex h-[40px] w-[344px] items-center border-t border-[#bbb] bg-[#f2f2f2] pl-[10px] text-[#333]">
        <svg width="20" height="20"><circle cx="10" cy="10" r="8.5" fill="none" stroke="#1a1a1a" strokeWidth="2.5" /></svg>
        <span className="ml-[10px] flex-1 text-[14.5px] tracking-[-0.2px]">Escribe aquí para buscar</span>
        <svg width="12" height="18" viewBox="0 0 12 18" fill="none" stroke="#333" className="mr-[15px]" strokeWidth="1.2"><rect x="3.5" y="1" width="5" height="10" rx="2.5" /><path d="M1 8C1 15 11 15 11 8M6 13V17" /></svg>
      </div>
      <div className="ml-[2px] flex">
        {apps.map((a, i) => (
          <div key={i} className={`flex h-[40px] w-[49px] flex-col items-center ${a.state === 'active' ? 'bg-[#3d4c58]' : ''}`}>
            <div className="flex h-[38px] items-center justify-center">{a.icon}</div>
            {a.state && <div className={`h-[2px] bg-[#76b9ed] ${a.state === 'active' ? 'w-[49px]' : 'w-[40px]'}`} />}
          </div>
        ))}
      </div>
      <div className="flex-1" />
      <svg width="16" height="18" viewBox="0 0 16 18" fill="none" stroke="#fff" strokeWidth="1.2" className="mr-[22px]"><circle cx="11" cy="4" r="2.5" /><circle cx="5" cy="8.5" r="2.5" /><path d="M1 17C1 11 9 11 9 17M8 9C11 6 15 8 15 13" /></svg>
      <svg width="12" height="8" fill="none" stroke="#fff" strokeWidth="1.3" className="mr-[10px]"><path d="M1 7L6 2L11 7" /></svg>
      <svg width="17" height="14" fill="none" stroke="#fff" strokeWidth="1.2" className="mr-[8px]"><path d="M1 5H3L7 1V13L3 9H1ZM10 5L15 10M15 5L10 10" /></svg>
      <svg width="18" height="16" fill="none" stroke="#fff" strokeWidth="1.2" className="mr-[10px]"><path d="M4 3H17V11H6M2 2V6H5V2M3.5 6V14H13M10 11V14" /></svg>
      <span className="mr-[17px] text-[12px] tracking-[-0.6px]">ESP</span>
      <div className="mr-[15px] w-[60px] text-center text-[12px] leading-[18px] tracking-[-0.3px]"><div>17:40</div><div>31/10/2018</div></div>
      <svg width="26" height="28" viewBox="0 0 26 28" className="mr-[13px]" fill="none"><path d="M2 2H18V15H12L8 19V15H2Z" fill="#fff" /><path d="M5 5.500H15M5 8.500H15M5 11.500H11" stroke="#14222e" strokeWidth="1.2" /><circle cx="17" cy="19.500" r="7.5" fill="#3b4650" stroke="#aaa" /><text x="17" y="23.500" textAnchor="middle" fontSize="11" fill="#fff" fontFamily="Open Sans">2</text></svg>
      <div className="h-[40px] w-px bg-[#445]" />
      <div className="w-[3px]" />
    </footer>
  );
}

function Defs() {
  return (
    <svg width="0" height="0" className="absolute">
      <defs>
        <linearGradient id="hexg" x1="0" y1="0" x2="0" y2="1"><stop offset="0" stopColor="#4b4b4b" /><stop offset="1" stopColor="#101010" /></linearGradient>
        <linearGradient id="tileg" x1="0" y1="0" x2="0" y2="1"><stop offset="0" stopColor="#888" /><stop offset=".5" stopColor="#bbb" /><stop offset="1" stopColor="#ddd" /></linearGradient>
        <linearGradient id="pinkg" x1="0" y1="0" x2="0" y2="1"><stop offset="0" stopColor="#d0106c" /><stop offset=".6" stopColor="#f53fa0" /><stop offset="1" stopColor="#ffc8e4" /></linearGradient>
        <linearGradient id="aqua" x1="0" y1="0" x2="0" y2="1"><stop offset="0" stopColor="#75dfda" /><stop offset=".6" stopColor="#7be6e1" /></linearGradient>
        <linearGradient id="heat"><stop offset="0" stopColor="#008000" /><stop offset=".15" stopColor="#208c00" /><stop offset=".42" stopColor="#ff0" /><stop offset=".58" stopColor="#ff0" /><stop offset=".9" stopColor="#f20" /><stop offset="1" stopColor="#f00" /></linearGradient>
        <radialGradient id="ball"><stop offset="0" stopColor="#f0f0f0" /><stop offset="1" stopColor="#b4b4b4" /></radialGradient>
        <radialGradient id="ball2" cx=".4" cy=".3"><stop offset="0" stopColor="#fff" /><stop offset="1" stopColor="#555" /></radialGradient>
        <radialGradient id="ballBlue" cx=".35" cy=".3"><stop offset="0" stopColor="#9cc4ff" /><stop offset=".4" stopColor="#1f57c8" /><stop offset="1" stopColor="#0a2468" /></radialGradient>
        <radialGradient id="eggRed" cx=".35" cy=".3"><stop offset="0" stopColor="#ffb0a8" /><stop offset=".4" stopColor="#e01c1c" /><stop offset="1" stopColor="#7c0606" /></radialGradient>
        <radialGradient id="glow"><stop offset=".4" stopColor="#5cf0a0" /><stop offset="1" stopColor="#5cf0a0" stopOpacity="0" /></radialGradient>
      </defs>
    </svg>
  );
}

export default function App() {
  return (
    <main className="relative h-[1080px] w-[1920px] overflow-hidden bg-[#5a9fd6]">
      <Defs />
      <div className="absolute left-0 top-0 h-[1040px] w-[10px] bg-gradient-to-b from-[#0c1e38] via-[#2f8fe0] to-[#5ab4ee]" />
      <div className="absolute right-0 top-0 h-[1040px] w-[10px] bg-gradient-to-b from-[#4589bd] via-[#4aa3de] to-[#12407a]" />
      <RhinoWindow />
      <GrasshopperWindow />
      <Taskbar />
    </main>
  );
}
